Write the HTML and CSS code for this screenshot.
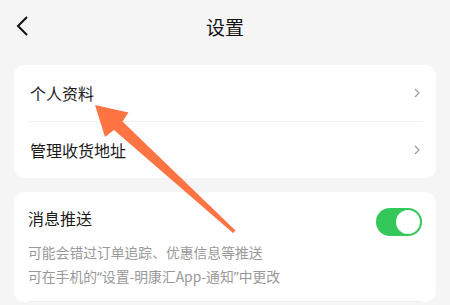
FILE: index.html
```html
<!DOCTYPE html>
<html lang="zh-CN">
<head>
<meta charset="utf-8">
<link rel="stylesheet" href="styles.css">
</head>
<body>
<div class="page">
  <header class="nav">
    <svg class="back" width="14" height="22" viewBox="0 0 14 22"><path d="M11 2 L2 11 L11 20" fill="none" stroke="#111" stroke-width="2"/></svg>
    <div class="title">设置</div>
  </header>
  <main class="content">
    <section class="card">
      <div class="row"><span class="row-label">个人资料</span><svg class="chev" width="6" height="10" viewBox="0 0 6 10"><path d="M1 1 L5 5 L1 9" fill="none" stroke="#999" stroke-width="1.1"/></svg></div>
      <div class="divider"></div>
      <div class="row"><span class="row-label">管理收货地址</span><svg class="chev" width="6" height="10" viewBox="0 0 6 10"><path d="M1 1 L5 5 L1 9" fill="none" stroke="#999" stroke-width="1.1"/></svg></div>
    </section>
    <section class="card push">
      <div class="push-head">
        <div class="push-text">
          <div class="push-title">消息推送</div>
          <div class="push-sub">可能会错过订单追踪、优惠信息等推送</div>
          <div class="push-sub">可在手机的<span class="q">“</span>设置-明康汇App-通知<span class="q">”</span>中更改</div>
        </div>
        <div class="toggle"><div class="knob"></div></div>
      </div>
      <div class="divider"></div>
    </section>
  </main>
  <svg class="arrow" width="450" height="305" viewBox="0 0 450 305">
    <polygon points="95,105 128.5,112.5 122.5,121.5 235.5,230.5 233,233 114,130 105,137" fill="#ff7443"/>
  </svg>
</div>
</body>
</html>
```

FILE: styles.css
```css
html, body {
  margin: 0;
  padding: 0;
  background: #f5f5f5;
}
body {
  font-family: "Noto Sans CJK SC", "Noto Sans", sans-serif;
  color: #1a1a1a;
}
.page {
  position: relative;
  width: 450px;
  height: 305px;
  overflow: hidden;
}
.nav {
  height: 54px;
  display: flex;
  align-items: center;
  justify-content: center;
  position: relative;
}
.back {
  position: absolute;
  left: 16px;
  top: 15px;
}
.title {
  font-size: 19px;
  line-height: 24px;
  color: #111;
}
.content {
  padding: 11px 14px 0;
  display: flex;
  flex-direction: column;
  gap: 14px;
}
.card {
  background: #fff;
  border-radius: 10px;
  padding: 0 14px;
}
.row {
  height: 56px;
  display: flex;
  align-items: center;
  justify-content: space-between;
}
.row-label {
  font-size: 16px;
  padding-left: 2px;
  color: #1a1a1a;
}
.chev {
  margin-right: 2px;
}
.divider {
  height: 1px;
  background: #efefef;
}
.push {
  padding-top: 15px;
  padding-bottom: 0;
}
.push-head {
  display: flex;
  justify-content: space-between;
  align-items: flex-start;
  padding-bottom: 12px;
}
.push-title {
  font-size: 16px;
  line-height: 22px;
  margin-bottom: 11px;
}
.push-sub {
  font-size: 13.8px;
  line-height: 24px;
  color: #999;
}
.q {
  font-family: "Noto Sans", sans-serif;
}
.toggle {
  width: 46px;
  height: 28px;
  border-radius: 14px;
  background: #34c759;
  margin-top: 1px;
  display: flex;
  justify-content: flex-end;
  align-items: center;
  padding: 0 2px;
  box-sizing: border-box;
}
.knob {
  width: 24px;
  height: 24px;
  border-radius: 50%;
  background: #fff;
}
.arrow {
  position: absolute;
  left: 0;
  top: 0;
  pointer-events: none;
}
```
